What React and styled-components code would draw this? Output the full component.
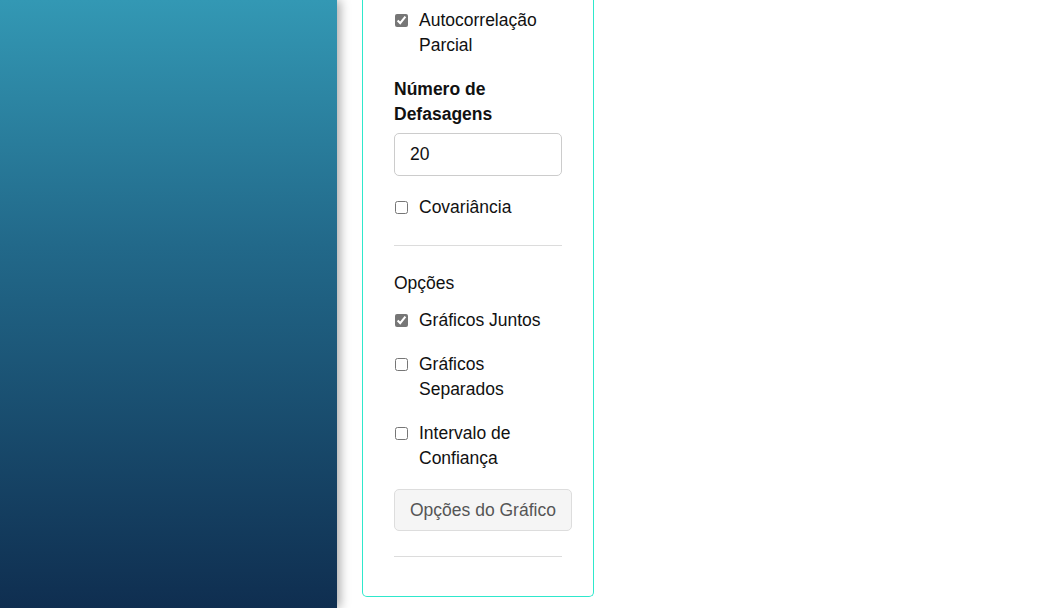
import React from "react";
import styled, { createGlobalStyle } from "styled-components";

const GlobalStyle = createGlobalStyle`
  html, body {
    margin: 0;
    padding: 0;
    background: #fff;
    font-family: "Liberation Sans", Arial, sans-serif;
    color: #111;
  }
`;

const Layout = styled.div`
  display: flex;
  height: 608px;
  overflow: hidden;
`;

const Sidebar = styled.aside`
  width: 337px;
  flex-shrink: 0;
  background: linear-gradient(180deg, #3398b4 0%, #22698a 40%, #0f2e50 100%);
  box-shadow: 3px 0 10px rgba(0, 0, 0, 0.35);
  position: relative;
  z-index: 1;
`;

const Main = styled.main`
  flex: 1;
  padding-left: 25px;
  display: flex;
  align-items: flex-start;
`;

const Panel = styled.section`
  width: 168px;
  padding: 8px 31px 14px;
  border: 1px solid #2ee8cc;
  border-top: none;
  border-radius: 0 0 5px 5px;
  font-size: 17.5px;
  line-height: 25px;
`;

const CheckRow = styled.label`
  display: flex;
  align-items: flex-start;
  margin-bottom: ${(p) => (p.$last ? "0" : "19px")};
  cursor: pointer;

  input {
    width: 13px;
    height: 13px;
    margin: 6px 11px 0 1px;
    flex-shrink: 0;
    accent-color: #767676;
  }
`;

const FieldLabel = styled.div`
  font-weight: bold;
  margin-bottom: 6px;
`;

const NumberInput = styled.input`
  box-sizing: border-box;
  width: 168px;
  height: 43px;
  padding: 0 15px;
  border: 1px solid #ccc;
  border-radius: 5px;
  font-family: inherit;
  font-size: 17.5px;
  color: #111;
  margin-bottom: 19px;
`;

const Divider = styled.hr`
  border: none;
  border-top: 1px solid #dcdcdc;
  margin: 25px 0;
`;

const SectionTitle = styled.div`
  margin-bottom: 12px;
`;

const GhostButton = styled.button`
  margin-top: 18px;
  height: 42px;
  padding: 0 15px;
  white-space: nowrap;
  background: #f5f5f5;
  border: 1px solid #ddd;
  border-radius: 5px;
  font-family: inherit;
  font-size: 17.5px;
  color: #555;
`;

function Check({ label, checked, last }) {
  return (
    <CheckRow $last={last}>
      <input type="checkbox" defaultChecked={checked} />
      <span>{label}</span>
    </CheckRow>
  );
}

export default function App() {
  return (
    <>
      <GlobalStyle />
      <Layout>
        <Sidebar />
        <Main>
          <Panel>
            <Check label="Autocorrelação Parcial" checked />
            <FieldLabel>Número de Defasagens</FieldLabel>
            <NumberInput type="text" defaultValue="20" />
            <Check label="Covariância" last />
            <Divider />
            <SectionTitle>Opções</SectionTitle>
            <Check label="Gráficos Juntos" checked />
            <Check label="Gráficos Separados" />
            <Check label="Intervalo de Confiança" last />
            <GhostButton>Opções do Gráfico</GhostButton>
            <Divider />
          </Panel>
        </Main>
      </Layout>
    </>
  );
}
